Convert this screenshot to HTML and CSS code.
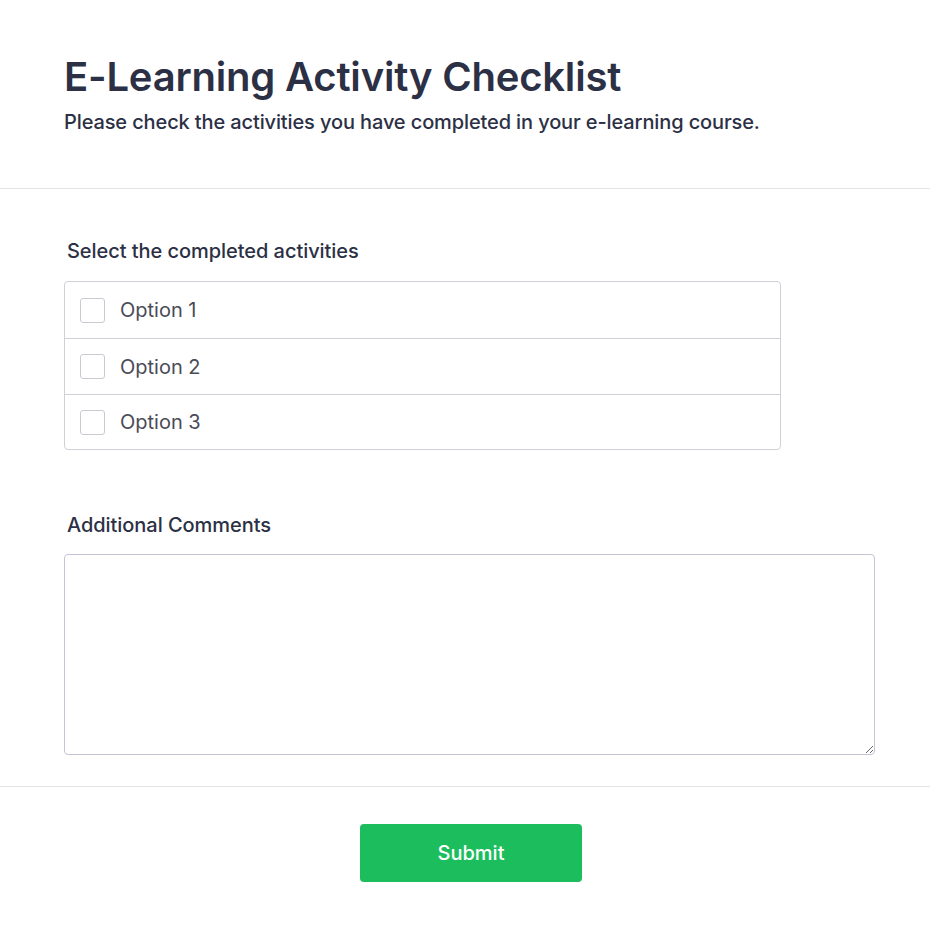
FILE: index.html
```html
<!DOCTYPE html>
<html>
<head>
<meta charset="utf-8">
<link rel="stylesheet" href="styles.css">
</head>
<body>
<form class="form">
  <header class="header">
    <h1 class="title">E-Learning Activity Checklist</h1>
    <p class="subtitle">Please check the activities you have completed in your e-learning course.</p>
  </header>
  <section class="body">
    <div class="field">
      <div class="label">Select the completed activities</div>
      <div class="checklist">
        <label class="option"><span class="box"></span><span class="opt-text">Option 1</span></label>
        <label class="option"><span class="box"></span><span class="opt-text">Option 2</span></label>
        <label class="option"><span class="box"></span><span class="opt-text">Option 3</span></label>
      </div>
    </div>
    <div class="field comments">
      <div class="label">Additional Comments</div>
      <textarea class="textarea"></textarea>
    </div>
  </section>
  <footer class="footer">
    <button type="button" class="submit">Submit</button>
  </footer>
</form>
</body>
</html>
```

FILE: styles.css
```css
* { box-sizing: border-box; }
html, body { margin: 0; padding: 0; background: #fff; }
body { font-family: Inter, "Noto Sans", sans-serif; color: #2c3045; }
.form { width: 930px; }
.header { padding: 53px 64px 52px; border-bottom: 1px solid #e3e3e8; }
.title { margin: 0; font-size: 40px; font-weight: 600; line-height: 48px; letter-spacing: -0.2px; color: #2c3045; }
.subtitle { margin: 7px 0 0; font-size: 20px; font-weight: 500; line-height: 28px; letter-spacing: -0.12px; color: #2c3045; }
.body { padding: 48px 55px 31px 64px; border-bottom: 1px solid #e3e3e8; }
.label { font-size: 20px; font-weight: 500; line-height: 28px; letter-spacing: -0.05px; padding-left: 3px; margin-bottom: 16px; color: #2c3045; }
.checklist { width: 717px; border: 1px solid #cfd0d6; border-radius: 4px; }
.option { display: flex; align-items: center; height: 56px; padding-left: 15px; border-top: 1px solid #cfd0d6; }
.option:first-child { border-top: none; height: 56px; }
.option:last-child { height: 55px; }
.box { width: 25px; height: 25px; border: 1px solid #c9cad3; border-radius: 3px; background: #fff; }
.opt-text { margin-left: 15px; font-size: 20px; color: #4a4b57; }
.comments { margin-top: 61px; }
.comments .label { margin-bottom: 15px; }
.textarea { display: block; width: 811px; height: 201px; border: 1px solid #c3c4d4; border-radius: 4px; resize: vertical; font-family: inherit; }
.footer { display: flex; justify-content: center; padding: 37px 0 50px 12px; }
.submit { width: 222px; height: 58px; border: none; border-radius: 4px; background: #1bbd5c; color: #fff; font-family: Inter, sans-serif; font-size: 20px; font-weight: 500; }
```
